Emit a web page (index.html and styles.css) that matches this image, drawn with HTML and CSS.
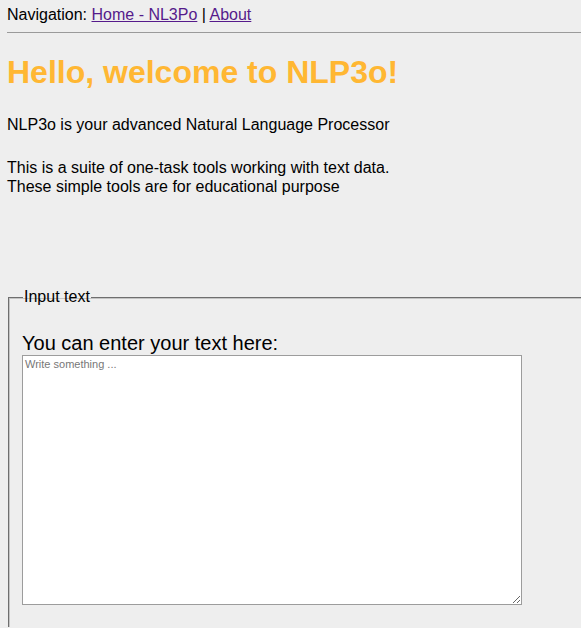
FILE: index.html
```html
<!DOCTYPE html>
<html>
<head>
<meta charset="utf-8">
<link rel="stylesheet" href="styles.css">
</head>
<body>
<div class="nav">Navigation: <a href="#" class="link">Home - NL3Po</a> | <a href="#" class="link">About</a></div>
<hr class="rule">
<h1 class="title">Hello, welcome to NLP3o!</h1>
<p class="text">NLP3o is your advanced Natural Language Processor</p>
<p class="text">This is a suite of one-task tools working with text data.<br>These simple tools are for educational purpose</p>
<fieldset class="box">
<legend class="legend">Input text</legend>
<label class="label" for="inp">You can enter your text here:</label>
<textarea id="inp" class="area" placeholder="Write something ..."></textarea>
</fieldset>
</body>
</html>
```
FILE: styles.css
```css
html, body {
  background: #eeeeee;
}
body {
  margin: 0;
  padding: 6px 0 0 7px;
  font-family: "Liberation Sans", Arial, sans-serif;
  font-size: 16px;
  color: #000;
  overflow: hidden;
}
.nav {
  line-height: 18px;
}
.link {
  color: #551a8b;
}
.rule {
  margin: 8px 0 0 0;
  border: 0;
  border-top: 1px solid #9a9a9a;
  height: 0;
}
.title {
  margin: 21px 0 0 0;
  font-size: 32px;
  line-height: 37px;
  color: #ffb733;
  font-weight: bold;
}
.text {
  margin: 24px 0 0 0;
  line-height: 19px;
}
.box {
  margin: 92px 0 0 1px;
  padding: 26px 12px 22px 13px;
  border-style: solid;
  border-width: 1px 0 0 1px;
  border-color: #6e6e6e #b8b8b8 #b8b8b8 #6e6e6e;
  box-shadow: inset 1px 1px 0 #c4c4c4;
  min-width: 0;
}
.legend {
  padding: 0 1px;
  margin-left: 1px;
  font-size: 16px;
}
.label {
  display: block;
  font-size: 20px;
  line-height: 23px;
}
.area {
  display: block;
  box-sizing: border-box;
  width: 500px;
  height: 250px;
  margin: 0;
  border: 1px solid #9c9c9c;
  background: #fff;
  font-family: "Liberation Sans", Arial, sans-serif;
  font-size: 11px;
  padding: 2px;
  resize: both;
}
.area::placeholder {
  color: #777;
}
```
